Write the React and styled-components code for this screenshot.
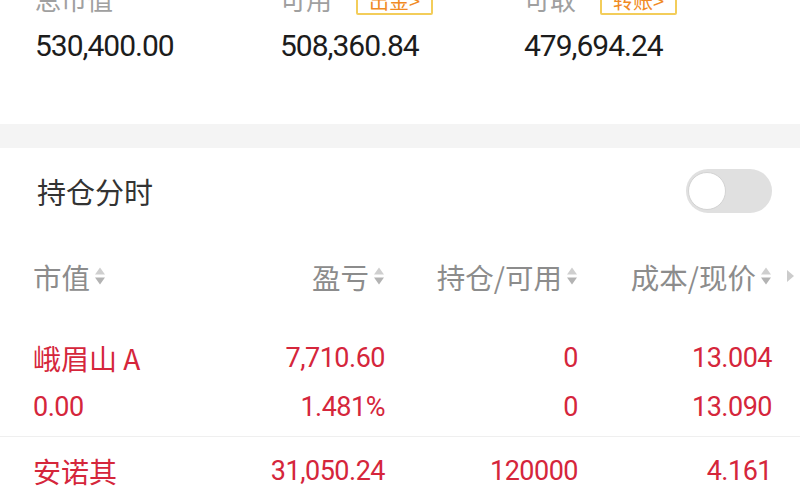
import styled, { createGlobalStyle } from "styled-components";

const GlobalStyle = createGlobalStyle`
  html, body {
    margin: 0;
    padding: 0;
    background: #fff;
    overflow: hidden;
  }
  body {
    font-family: Roboto, "Noto Sans CJK SC", sans-serif;
  }
`;

const RED = "#d5263b";
const CJK = `"Noto Sans CJK SC", "Noto Sans", sans-serif`;
const NUM = `Roboto, "Noto Sans CJK SC", sans-serif`;

const summary = [
  { label: "总市值", value: "530,400.00" },
  { label: "可用", value: "508,360.84", badge: "出金>" },
  { label: "可取", value: "479,694.24", badge: "转账>" },
];

const positions = [
  {
    name: "峨眉山 A",
    sub: "0.00",
    lines: [
      ["7,710.60", "0", "13.004"],
      ["1.481%", "0", "13.090"],
    ],
  },
  {
    name: "安诺其",
    lines: [["31,050.24", "120000", "4.161"]],
  },
];

// сортувальна іконка
function SortIcon() {
  return (
    <svg width="12" height="20" viewBox="0 0 12 20">
      <path d="M6 1.5 L11 8.5 H1 Z" fill="#cfcfcf" />
      <path d="M6 18.5 L11 11.5 H1 Z" fill="#b3b3b3" />
    </svg>
  );
}

export default function App() {
  return (
    <Page>
      <GlobalStyle />
      <Summary>
        {summary.map((s) => (
          <SummaryCol key={s.label}>
            <LabelRow>
              <Label>{s.label}</Label>
              {s.badge && <Badge>{s.badge}</Badge>}
            </LabelRow>
            <BigValue>{s.value}</BigValue>
          </SummaryCol>
        ))}
      </Summary>

      <Band />

      <TitleRow>
        <Title>持仓分时</Title>
        <Toggle>
          <Knob />
        </Toggle>
      </TitleRow>

      <HeaderRow>
        <HeadCell>
          市值
          <SortIcon />
        </HeadCell>
        <HeadCell right>
          盈亏
          <SortIcon />
        </HeadCell>
        <HeadCell right>
          持仓/可用
          <SortIcon />
        </HeadCell>
        <HeadCell right>
          成本/现价
          <SortIcon />
        </HeadCell>
        <MoreArrow>
          <svg width="9" height="14" viewBox="0 0 9 14">
            <path d="M1 1 L8 7 L1 13 Z" fill="#cccccc" />
          </svg>
        </MoreArrow>
      </HeaderRow>

      {positions.map((p, i) => (
        <Position key={p.name} last={i === positions.length - 1}>
          <Line>
            <Name>{p.name}</Name>
            {p.lines[0].map((v, k) => (
              <Num key={k}>{v}</Num>
            ))}
          </Line>
          {p.lines[1] && (
            <Line>
              <SubNum>{p.sub}</SubNum>
              {p.lines[1].map((v, k) => (
                <Num key={k}>{v}</Num>
              ))}
            </Line>
          )}
        </Position>
      ))}
    </Page>
  );
}

const Page = styled.div`
  width: 800px;
  margin-top: -17px;
`;

const Summary = styled.div`
  display: grid;
  grid-template-columns: 245px 244px 1fr;
  padding: 0 0 0 35px;
  height: 141px;
`;

const SummaryCol = styled.div`
  display: flex;
  flex-direction: column;
  gap: 13px;
`;

const LabelRow = styled.div`
  display: flex;
  align-items: center;
  gap: 24px;
  height: 32px;
`;

const Label = styled.span`
  font-family: ${CJK};
  font-size: 26px;
  line-height: 32px;
  color: #a0a0a0;
`;

const Badge = styled.span`
  font-family: ${CJK};
  font-size: 20px;
  line-height: 25px;
  padding: 0 11px;
  color: #f08a24;
  border: 2px solid #f3cd5a;
  border-radius: 2px;
  margin-top: 2px;
`;

const BigValue = styled.div`
  font-family: ${NUM};
  font-size: 30px;
  line-height: 36px;
  color: #1c1c1c;
  letter-spacing: -1px;
`;

const Band = styled.div`
  height: 24px;
  background: #f4f4f4;
`;

const TitleRow = styled.div`
  display: flex;
  align-items: center;
  justify-content: space-between;
  height: 86px;
  padding: 0 28px 0 37px;
`;

const Title = styled.div`
  font-family: ${CJK};
  font-size: 29px;
  color: #333;
`;

const Toggle = styled.div`
  width: 86px;
  height: 44px;
  border-radius: 22px;
  background: #e0e0e0;
  display: flex;
  align-items: center;
  padding: 0 2px;
  box-sizing: border-box;
`;

const Knob = styled.div`
  width: 38px;
  height: 38px;
  border-radius: 50%;
  background: #fff;
  border: 1.5px solid #d3d3d3;
  box-sizing: border-box;
`;

const grid = `
  display: grid;
  grid-template-columns: 162px 190px 193px 194px 28px;
  padding-left: 33px;
  align-items: center;
`;

const HeaderRow = styled.div`
  ${grid}
  height: 84px;
`;

const HeadCell = styled.div`
  display: flex;
  align-items: center;
  justify-content: ${({ right }) => (right ? "flex-end" : "flex-start")};
  gap: 4px;
  font-family: ${CJK};
  font-size: 28.5px;
  color: #8c8c8c;
  white-space: nowrap;
`;

const MoreArrow = styled.div`
  display: flex;
  justify-content: flex-end;
  padding-right: 5px;
`;

const Position = styled.div`
  display: flex;
  flex-direction: column;
  gap: 15px;
  padding: ${({ last }) => (last ? "14px 0 20px" : "20px 0 11px")};
  border-bottom: ${({ last }) => (last ? "none" : "1px solid #efefef")};
`;

const Line = styled.div`
  ${grid}
  height: 36px;
`;

const Name = styled.div`
  font-family: ${CJK};
  font-size: 28px;
  color: ${RED};
  white-space: nowrap;
`;

const SubNum = styled.div`
  font-family: ${NUM};
  font-size: 27px;
  letter-spacing: -0.5px;
  color: ${RED};
`;

const Num = styled.div`
  font-family: ${NUM};
  font-size: 27px;
  letter-spacing: -0.5px;
  color: ${RED};
  text-align: right;
`;
